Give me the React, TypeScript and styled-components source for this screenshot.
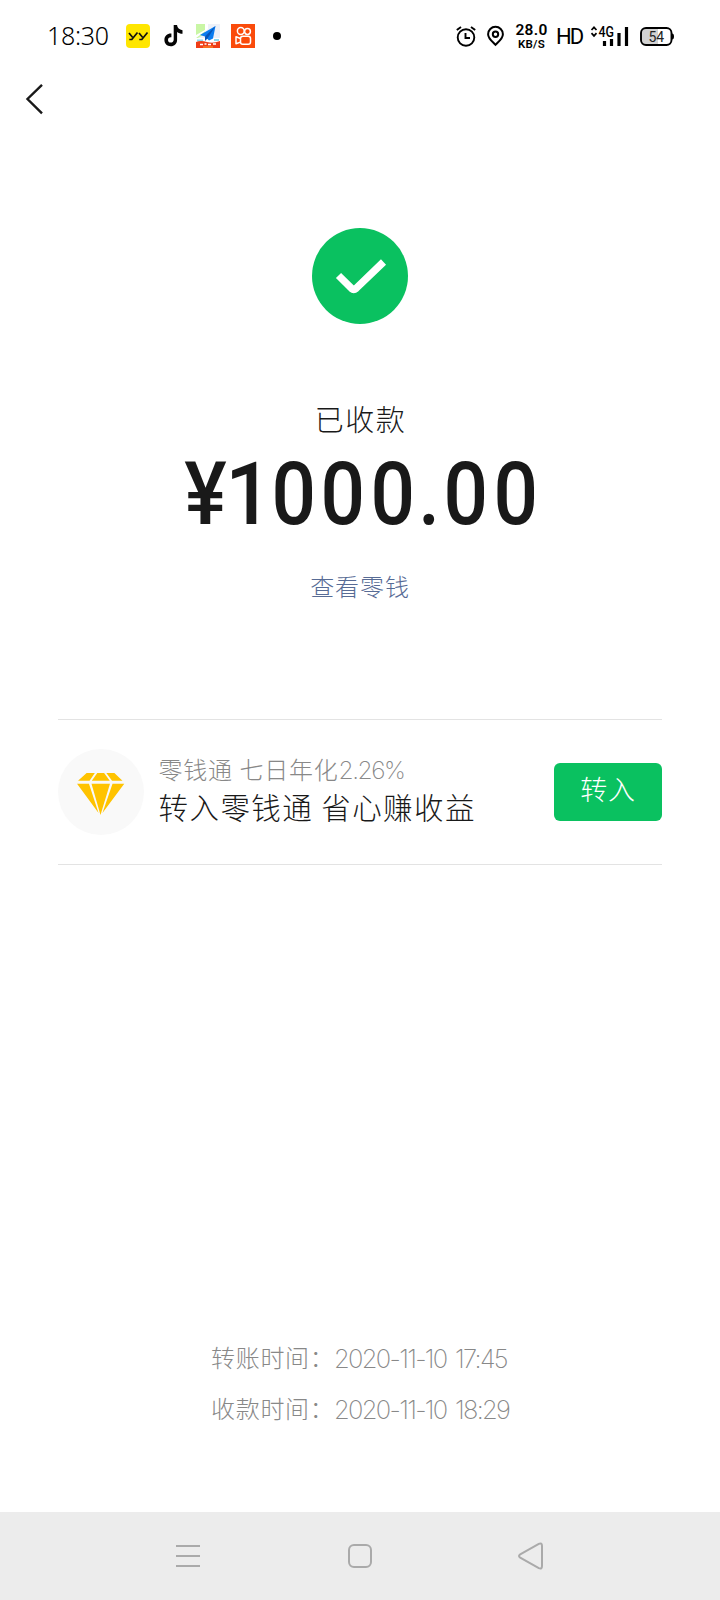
import React from "react";
import styled, { createGlobalStyle } from "styled-components";

const Global = createGlobalStyle`
  *{box-sizing:border-box}
  body{margin:0;background:#fff}
  svg{display:block;flex:none;overflow:visible}
`;
const cjk = `"Noto Sans CJK SC", sans-serif`;

const Screen = styled.div`
  width:720px;height:1600px;display:flex;flex-direction:column;
  background:#fff;color:#191919;font-family:${cjk};font-weight:300;overflow:hidden;
`;
const StatusBar = styled.header`
  height:72px;padding:0 45px 0 47px;display:flex;align-items:center;justify-content:space-between;color:#000;
`;
const Cluster = styled.div`display:flex;align-items:center;`;
const Clock = styled.span`
  width:79px;font:350 25px/30px "Noto Sans",sans-serif;letter-spacing:-.3px;white-space:nowrap;padding-bottom:2px;
`;
const Slot = styled.span<{ $gap: number }>`display:flex;margin-left:${p => p.$gap}px;`;
const Rate = styled.div`
  width:33px;margin-left:11px;display:flex;flex-direction:column;align-items:center;white-space:nowrap;
  font-family:Roboto,sans-serif;font-weight:600;
`;
const RateValue = styled.span`font-size:15.5px;line-height:15px;letter-spacing:.3px;`;
const RateUnit = styled.span`font-size:11.5px;line-height:12px;letter-spacing:.2px;`;
const Hd = styled.span`width:26px;margin-left:8px;font:400 22px/24px Roboto,sans-serif;letter-spacing:-2px;padding-top:1px;margin-right:1px;`;
const NavTop = styled.nav`height:56px;padding:12px 0 0 25px;`;
const Result = styled.main`display:flex;flex-direction:column;align-items:center;padding-top:100px;height:591px;`;
const State = styled.h1`
  margin:72px 0 0 1px;font-size:29px;line-height:44px;font-weight:300;letter-spacing:1.5px;
`;
const Amount = styled.div`
  height:92px;margin:8px 7px 0 0;display:flex;align-items:center;
  font:500 87px/92px Roboto,sans-serif;white-space:nowrap;
`;
const Glyph = styled.span<{ $shift?: number; $scale?: number }>`
  display:block;transform:translateX(${p => p.$shift ?? 0}px) scale(${p => p.$scale ?? 0.9}, 1);
`;
const WalletLink = styled.a`
  margin-top:28px;font-size:24px;line-height:36px;letter-spacing:.9px;color:#576b95;
`;
const Promo = styled.section`
  margin:0 58px;height:146px;border:solid #e3e3e3;border-width:1px 0;display:flex;align-items:center;
`;
const Badge = styled.div`
  width:86px;height:86px;border-radius:50%;background:#f9f9f9;display:flex;align-items:center;justify-content:center;padding:3px 1px 0 0;
`;
const PromoText = styled.div`margin-left:14.5px;flex:1;display:flex;flex-direction:column;white-space:nowrap;padding-bottom:11px;`;
const Yield = styled.span`font-size:24px;line-height:38px;letter-spacing:.7px;color:#888;word-spacing:1px;`;
const Rating = styled.span`font:200 24.5px/36px Inter,sans-serif;letter-spacing:-1.4px;`;
const Title = styled.span`font-size:29.5px;line-height:36px;letter-spacing:1.45px;`;
const Transfer = styled.button`
  width:108px;height:58px;border:0;border-radius:6px;padding:0 0 6px;background:#0ac160;color:#fff;
  font:300 27px/40px ${cjk};letter-spacing:.8px;
`;
const Times = styled.footer`margin-top:auto;padding:0 0 79px 211px;`;
const TimeRow = styled.div`display:flex;height:51px;align-items:center;color:#888;white-space:nowrap;`;
const TimeLabel = styled.span`width:123px;font-size:24px;line-height:36px;letter-spacing:.7px;`;
const TimeValue = styled.span`font:250 25.5px/36px Inter,sans-serif;letter-spacing:-1.7px;word-spacing:3px;padding-top:4px;`;
const SystemNav = styled.nav`height:88px;background:#ececec;display:flex;align-items:center;padding:0 176px 0 175px;justify-content:space-between;`;

const times = [
  ["转账时间：", "2020-11-10 17:45"],
  ["收款时间：", "2020-11-10 18:29"],
];

const YY = () => (
  <svg width="24" height="24" viewBox="0 0 24 24">
    <rect width="24" height="24" rx="4" fill="#ffe600" />
    <path d="M3 9 6.500 13.200M11.500 8.500 5.800 15.500H3.300M13 9l3.500 4.200M21.500 8.500 15.800 15.500h-2.500" fill="none" stroke="#111" strokeWidth="1.700" />
  </svg>
);
const Note = () => (
  <svg width="19" height="22" viewBox="0 0 19 22">
    <path d="M9.7 0H13c.4 2.9 2.2 4.8 5.5 5.2v3.5c-2.1 0-3.9-.7-5.4-1.8v7.8c0 4-2.7 6.5-6.4 6.5C3 21.200.4 18.500.4 15c0-4 3-6.600 7-6.400v3.700c-2-.3-3.400.8-3.400 2.600 0 1.600 1.100 2.700 2.700 2.700 1.900 0 3-1.200 3-3.200z" fill="#050505" />
  </svg>
);
const Plane = () => (
  <svg width="24" height="24" viewBox="0 0 24 24">
    <path fill="#eef1f8" d="M0 0h24v24H0z" />
    <path fill="#c9f6a5" d="M0 0h9v10L0 15z" />
    <path fill="#fff" d="M9 0h3v5L0 14v-3l9-5zM0 14h24v4H0z" />
    <path fill="#8bd9ef" d="M1 15.500h6v2H1zM18 15h5v2h-5z" />
    <path fill="#ef3d16" d="M0 18q5-2 11 0t13-1v7H0z" />
    <path fill="#0a7cf0" d="M19.500 2 4 11l5 1.500 4 4 4-2z" />
    <path fill="#0755b6" d="M19.500 2 9 12.500V17l2.500-2.500z" />
    <path d="M4 20.500h3M8.500 20h2M12 20.500h3M17 20h3" stroke="#fff" strokeWidth="1.600" />
    <path d="M7 23h10" stroke="#ffa32b" />
  </svg>
);
const Camera = () => (
  <svg width="24" height="24" viewBox="0 0 24 24">
    <path fill="#fa4b0b" d="M0 0h24v24H0z" />
    <g fill="none" stroke="#fff" strokeWidth="1.500">
      <circle cx="9.800" cy="7" r="3.400" /><circle cx="16.500" cy="7.500" r="2.900" />
      <rect x="9.500" y="12.300" width="10" height="8" rx="2.300" />
      <path d="M9.500 14.500 5 12.800v7l4.500-1.700" strokeLinejoin="round" />
    </g>
  </svg>
);
const Alarm = () => (
  <svg width="20" height="21" viewBox="0 0 20 21" fill="none" stroke="#000" strokeWidth="1.900">
    <circle cx="10" cy="11.500" r="8.300" /><path d="M9.500 7v5H14M.8 4 5 .9M15 .9 19.200 4" />
  </svg>
);
const Pin = () => (
  <svg width="17" height="20" viewBox="0 0 17 20" fill="none" stroke="#000" strokeWidth="2">
    <path d="M8.500 18.800C5 15.200 1.100 12.500 1.100 8.200a7.400 7.400 0 0 1 14.800 0c0 4.300-3.900 7-7.400 10.600Z" /><circle cx="8.500" cy="8.200" r="2.700" />
  </svg>
);
const Signal = () => (
  <svg width="38" height="21" viewBox="0 0 38 21">
    <path d="M.5 4 3 1.300 5.500 4M.5 7.200 3 9.900l2.500-2.700" fill="none" stroke="#000" strokeWidth="1.700" />
    <text x="7.500" y="10.500" fontSize="14" fontFamily="Roboto, sans-serif" fontWeight="500" textLength="15.500" lengthAdjust="spacingAndGlyphs">4G</text>
    <path d="M13.500 15v5M20.500 13v7M28 7v13M35.500 1v19" stroke="#000" strokeWidth="3.200" strokeLinecap="butt" />
  </svg>
);
const Battery = () => (
  <svg width="35" height="19" viewBox="0 0 35 19">
    <path d="M6 1h12v17H6q-5 0-5-5V6q0-5 5-5" fill="#d2d2d2" />
    <rect x="1" y="1" width="30.500" height="17" rx="5" fill="none" stroke="#000" strokeWidth="1.900" />
    <path d="M32 6.500q2 0 2 3t-2 3z" />
    <text x="8.500" y="14.500" fontSize="14" fontFamily="Roboto, sans-serif" fontWeight="400" fill="#222" textLength="15.500">54</text>
  </svg>
);
const Diamond = () => (
  <svg width="49" height="43" viewBox="0 0 49 44" fill="#ffc300">
    <path d="M10.300 1h8.400l-5.400 8H1.500zM21.200 1h7L34 9H15.600zM30.500 1h8.200L47 9H36.300z" />
    <path d="M.5 12h12.200l9.800 30zM15.300 12h18.900L24.500 44zM36.800 12h12L26.500 42z" />
  </svg>
);

export default function App() {
  return (
    <Screen>
      <Global />
      <StatusBar>
        <Cluster>
          <Clock>18:30</Clock>
          <Slot $gap={0}><YY /></Slot>
          <Slot $gap={14}><Note /></Slot>
          <Slot $gap={13}><Plane /></Slot>
          <Slot $gap={11}><Camera /></Slot>
          <Slot $gap={18}><svg width="8" height="8"><circle cx="4" cy="4" r="4" /></svg></Slot>
        </Cluster>
        <Cluster>
          <Alarm />
          <Slot $gap={11}><Pin /></Slot>
          <Rate><RateValue>28.0</RateValue><RateUnit>KB/S</RateUnit></Rate>
          <Hd>HD</Hd>
          <Slot $gap={8}><Signal /></Slot>
          <Slot $gap={11}><Battery /></Slot>
        </Cluster>
      </StatusBar>
      <NavTop>
        <svg width="18" height="30" viewBox="0 0 18 30"><path d="M17 .800 2.500 15 17 29.300" fill="none" stroke="#191919" strokeWidth="2.400" /></svg>
      </NavTop>
      <Result>
        <svg width="96" height="96" viewBox="0 0 96 96">
          <circle cx="48" cy="48" r="48" fill="#0ac160" />
          <path d="m26.500 47.500 13 12.900q2.300 2 4.600 0L71.500 34" fill="none" stroke="#fff" strokeWidth="7.300" />
        </svg>
        <State>已收款</State>
        <Amount>
          <Glyph $shift={9.5} $scale={0.92}>¥</Glyph>
          <Glyph $shift={5} $scale={0.95}>1</Glyph>
          <Glyph>0</Glyph><Glyph>0</Glyph><Glyph>0</Glyph>
          <Glyph>.</Glyph>
          <Glyph>0</Glyph><Glyph>0</Glyph>
        </Amount>
        <WalletLink>查看零钱</WalletLink>
      </Result>
      <Promo>
        <Badge><Diamond /></Badge>
        <PromoText>
          <Yield>零钱通 七日年化<Rating>2.26%</Rating></Yield>
          <Title>转入零钱通 省心赚收益</Title>
        </PromoText>
        <Transfer>转入</Transfer>
      </Promo>
      <Times>
        {times.map(([label, value]) => (
          <TimeRow key={label}><TimeLabel>{label}</TimeLabel><TimeValue>{value}</TimeValue></TimeRow>
        ))}
      </Times>
      <SystemNav>
        <svg width="26" height="24" viewBox="0 0 26 24"><path d="M1 2h24M1 12h24M1 22h24" stroke="#aaa" strokeWidth="2" /></svg>
        <svg width="24" height="24" viewBox="0 0 24 24"><rect x="1" y="1" width="22" height="22" rx="5" fill="none" stroke="#aaa" strokeWidth="2" /></svg>
        <svg width="26" height="28" viewBox="0 0 26 28"><path d="M2.200 12.400 20.800 1.800Q24 .4 24 4v20q0 3.600-3.200 2.200L2.200 15.600q-2.400-1.600 0-3.200Z" fill="none" stroke="#aaa" strokeWidth="2" /></svg>
      </SystemNav>
    </Screen>
  );
}
